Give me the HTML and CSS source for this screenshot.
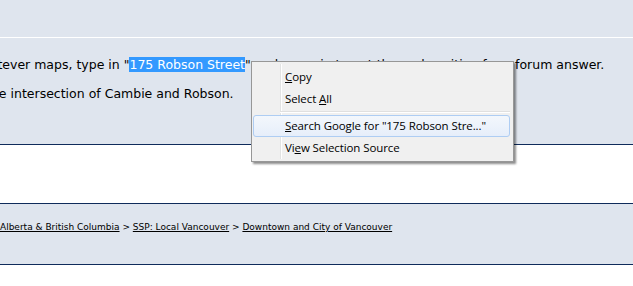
FILE: index.html
```html
<!DOCTYPE html>
<html lang="en">

<head>
  <meta charset="UTF-8" />
  <title>Downtown and City of Vancouver</title>
  <link rel="stylesheet" href="styles.css">
</head>

<body>
  <div class="page">
    <div class="thead"></div>

    <div class="post">
      <div class="post-text">
        <p>In whatever maps, type in "<span class="sel">175 Robson Street</span>" and zoom in to get the real position for a forum answer.</p>
        <p>Past the intersection of Cambie and Robson.</p>
      </div>
    </div>

    <div class="spacer"></div>

    <div class="navbar">
      <div class="crumbs">
        <a href="#">Alberta &amp; British Columbia</a> &gt;
        <a href="#">SSP: Local Vancouver</a> &gt;
        <a href="#">Downtown and City of Vancouver</a>
      </div>
    </div>
  </div>

  <!-- context menu over the selection -->
  <div class="ctx-menu">
    <div class="ctx-item"><u>C</u>opy</div>
    <div class="ctx-item">Select <u>A</u>ll</div>
    <div class="ctx-sep"></div>
    <div class="ctx-item hover"><u>S</u>earch Google for "175 Robson Stre..."</div>
    <div class="ctx-item">Vi<u>e</u>w Selection Source</div>
  </div>
</body>

</html>
```

FILE: styles.css
```css
html,
body {
  margin: 0;
  padding: 0;
  height: 100%;
  overflow: hidden;
  background: #fff;
  font-family: "DejaVu Sans", Verdana, sans-serif;
  color: #000;
}

.page {
  display: flex;
  flex-direction: column;
}

.thead {
  height: 37px;
  background: #dfe5ee;
  border-bottom: 1px solid #fff;
}

.post {
  height: 107px;
  background: #dfe5ee;
  border-bottom: 1px solid #0f2b5b;
  padding-top: 18px;
  box-sizing: border-box;
}

.post-text {
  margin-left: -44px;
  font-size: 12.5px;
  line-height: 17px;
  white-space: nowrap;
}

.post-text p {
  margin: 0 0 12px 0;
}

.sel {
  background: #3399ff;
  color: #fff;
}

.spacer {
  height: 58px;
}

.navbar {
  height: 62px;
  background: #dfe5ee;
  border-top: 1px solid #0f2b5b;
  border-bottom: 1px solid #0f2b5b;
  box-sizing: border-box;
  display: flex;
  align-items: center;
}

.crumbs {
  font-size: 9px;
  white-space: nowrap;
  padding-bottom: 14px;
}

.crumbs a {
  color: #000;
  text-decoration: underline;
}

/* windows 7 style menu */
.ctx-menu {
  position: absolute;
  left: 251px;
  top: 61px;
  width: 263px;
  box-sizing: border-box;
  padding: 4px 3px 2px 1px;
  background: #f0f0f0;
  border: 1px solid #979797;
  box-shadow: 2px 2px 2px rgba(0, 0, 0, 0.45);
  font-family: "Open Sans", "Noto Sans", sans-serif;
  font-size: 11.5px;
  letter-spacing: -0.1px;
  color: #000;
}

.ctx-menu:before {
  content: "";
  position: absolute;
  left: 28px;
  top: 2px;
  bottom: 2px;
  width: 1px;
  background: #e2e3e3;
  border-right: 1px solid #fff;
}

.ctx-item {
  position: relative;
  height: 22px;
  line-height: 20px;
  padding-left: 31px;
  border: 1px solid transparent;
  border-radius: 3px;
  box-sizing: border-box;
  white-space: nowrap;
}

.ctx-item.hover {
  border-color: #aecdf3;
  background: linear-gradient(#f3f7fc, #e6eefa);
}

.ctx-sep {
  position: relative;
  height: 5px;
  margin-left: 27px;
}

.ctx-sep:before {
  content: "";
  position: absolute;
  left: 0;
  right: 0;
  top: 1px;
  height: 1px;
  background: #e0e0e0;
  border-bottom: 1px solid #fff;
}
```
